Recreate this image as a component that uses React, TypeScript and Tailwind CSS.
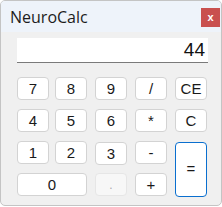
import React from "react";

const btn =
  "flex items-center justify-center h-[23px] rounded-[4px] border border-[#d3d3d3] bg-white text-[15px] text-[#1a1a1a] leading-none";

export default function App() {
  return (
    <div className="w-[222px] h-[207px] bg-white" style={{ fontFamily: '"Liberation Sans", Arial, sans-serif' }}>
      <div className="w-[222px] h-[206px] rounded-[5px] border border-[#c4c4c4] bg-[#f0f0f0] overflow-hidden flex flex-col">
        <div className="h-[31px] bg-[#eef3fa] flex items-center justify-between pl-[9px] pr-[1px] shrink-0">
          <span className="text-[16px] text-[#1c1c1c]" style={{ fontFamily: '"Open Sans", "Noto Sans", sans-serif' }}>
            NeuroCalc
          </span>
          <div className="w-[19px] h-[19px] bg-[#c9504f] flex items-center justify-center text-white text-[11px] font-bold leading-none mt-[2px]">
            x
          </div>
        </div>
        <div className="pl-[16px] pt-[6px]">
          <div className="w-[191px] h-[25px] bg-white border-b border-[#7a7a7a] flex items-center justify-end pr-[3px] text-[19px] text-[#111]">
            44
          </div>
          <div className="grid grid-cols-[38px_40px_40px_40px_32px] grid-rows-[23px_23px_23px_23px] gap-y-[9px] mt-[14px]">
            <div className={`${btn} w-[32px]`}>7</div>
            <div className={`${btn} w-[32px]`}>8</div>
            <div className={`${btn} w-[32px]`}>9</div>
            <div className={`${btn} w-[32px]`}>/</div>
            <div className={`${btn} w-[32px]`}>CE</div>
            <div className={`${btn} w-[32px]`}>4</div>
            <div className={`${btn} w-[32px]`}>5</div>
            <div className={`${btn} w-[32px]`}>6</div>
            <div className={`${btn} w-[32px]`}>*</div>
            <div className={`${btn} w-[32px]`}>C</div>
            <div className={`${btn} w-[32px]`}>1</div>
            <div className={`${btn} w-[32px]`}>2</div>
            <div className={`${btn} w-[32px] mt-[1px]`}>3</div>
            <div className={`${btn} w-[32px]`}>-</div>
            <div className="row-span-2 w-[32px] h-[55px] rounded-[4px] border border-[#0a6fcf] bg-white flex items-center justify-center text-[15px] text-[#1a1a1a] mt-[1px]">
              =
            </div>
            <div className={`${btn} w-[70px] col-span-2`}>0</div>
            <div className="flex items-center justify-center h-[23px] w-[32px] rounded-[4px] border border-[#e6e6e6] bg-[#f7f7f7] text-[12px] text-[#aaa]">
              .
            </div>
            <div className={`${btn} w-[32px]`}>+</div>
          </div>
        </div>
      </div>
    </div>
  );
}
